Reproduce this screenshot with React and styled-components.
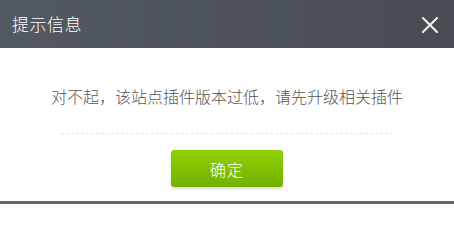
import React from 'react'
import styled, { createGlobalStyle } from 'styled-components'

const GlobalStyle = createGlobalStyle`
  html, body {
    margin: 0;
    padding: 0;
    background: #fff;
    font-family: 'Microsoft YaHei', 'Noto Sans CJK SC', sans-serif;
  }
`

const App = () =>
  <>
    <GlobalStyle />
    <Dialog>
      <Header>
        <Title>提示信息</Title>
        <CloseButton aria-label="关闭">
          <svg width="16" height="16" viewBox="0 0 16 16">
            <path d="M1 1 L15 15 M15 1 L1 15" stroke="#f4f4f4" strokeWidth="2" strokeLinecap="square" />
          </svg>
        </CloseButton>
      </Header>
      <Body>
        <Message>对不起，该站点插件版本过低，请先升级相关插件</Message>
        <Divider />
        <Footer>
          <ConfirmButton>确定</ConfirmButton>
        </Footer>
      </Body>
    </Dialog>
    <PageBelow />
  </>

export default App

const Dialog = styled.div`
  width: 454px;
  height: 201px;
  background: #fff;
  display: flex;
  flex-direction: column;
`

const Header = styled.div`
  height: 48px;
  background: linear-gradient(to right, #535962, #474c53);
  display: flex;
  align-items: center;
  justify-content: space-between;
  padding: 0 16px 0 12px;
`

const Title = styled.div`
  color: #fff;
  font-size: 17px;
  font-weight: 300;
  letter-spacing: 0.5px;
  margin-top: -2px;
`

const CloseButton = styled.button`
  border: 0;
  padding: 0;
  background: none;
  width: 16px;
  height: 16px;
  display: flex;
  margin-top: 2px;
`

const Body = styled.div`
  flex: 1;
  display: flex;
  flex-direction: column;
  align-items: center;
`

const Message = styled.div`
  margin-top: 37px;
  font-size: 16px;
  font-weight: 300;
  line-height: 22px;
  color: #555;
`

const Divider = styled.div`
  width: 332px;
  margin-top: 26px;
  border-top: 1px dashed #e3e3e3;
`

const Footer = styled.div`
  margin-top: 16px;
  display: flex;
  justify-content: center;
`

const ConfirmButton = styled.button`
  width: 112px;
  height: 37px;
  border: 0;
  border-radius: 3px;
  background: linear-gradient(to bottom, #93d104, #73b000);
  box-shadow: 0 2px 3px rgba(0, 0, 0, 0.15);
  color: #fff;
  font-family: 'Microsoft YaHei', 'Noto Sans CJK SC', sans-serif;
  font-size: 16px;
  font-weight: 300;
  letter-spacing: 1px;
  padding: 0;
`

const PageBelow = styled.div`
  height: 3px;
  width: 454px;
  background: #666;
`
